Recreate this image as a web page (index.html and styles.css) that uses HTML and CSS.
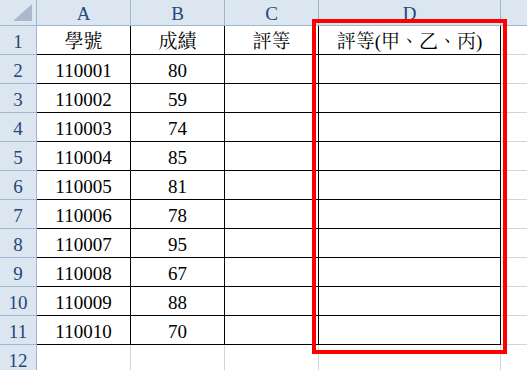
FILE: index.html
```html
<!DOCTYPE html>
<html>
<head>
<meta charset="utf-8">
<title>Sheet</title>
<link rel="stylesheet" href="styles.css">
</head>
<body>
<div class="sheet">
  <div class="grid">
    <div class="corner"><svg width="36" height="25" viewBox="0 0 36 25"><polygon points="13,21 32,21 32,4" fill="#aab9cc"/></svg></div>
    <div class="hd">A</div><div class="hd">B</div><div class="hd">C</div><div class="hd">D</div><div class="hd last"></div>

    <div class="rh">1</div><div class="c">學號</div><div class="c">成績</div><div class="c">評等</div><div class="c">評等(甲、乙、丙)</div><div class="g"></div>
    <div class="rh">2</div><div class="c">110001</div><div class="c">80</div><div class="c"></div><div class="c"></div><div class="g"></div>
    <div class="rh">3</div><div class="c">110002</div><div class="c">59</div><div class="c"></div><div class="c"></div><div class="g"></div>
    <div class="rh">4</div><div class="c">110003</div><div class="c">74</div><div class="c"></div><div class="c"></div><div class="g"></div>
    <div class="rh">5</div><div class="c">110004</div><div class="c">85</div><div class="c"></div><div class="c"></div><div class="g"></div>
    <div class="rh">6</div><div class="c">110005</div><div class="c">81</div><div class="c"></div><div class="c"></div><div class="g"></div>
    <div class="rh">7</div><div class="c">110006</div><div class="c">78</div><div class="c"></div><div class="c"></div><div class="g"></div>
    <div class="rh">8</div><div class="c">110007</div><div class="c">95</div><div class="c"></div><div class="c"></div><div class="g"></div>
    <div class="rh">9</div><div class="c">110008</div><div class="c">67</div><div class="c"></div><div class="c"></div><div class="g"></div>
    <div class="rh">10</div><div class="c">110009</div><div class="c">88</div><div class="c"></div><div class="c"></div><div class="g"></div>
    <div class="rh">11</div><div class="c">110010</div><div class="c">70</div><div class="c"></div><div class="c"></div><div class="g"></div>
    <div class="rh">12</div><div class="g"></div><div class="g"></div><div class="g"></div><div class="g"></div><div class="g"></div>
  </div>
  <div class="highlight"></div>
</div>
</body>
</html>
```

FILE: styles.css
```css
html, body {
  margin: 0;
  padding: 0;
  background: #ffffff;
  overflow: hidden;
}
.sheet {
  position: relative;
  width: 527px;
  height: 370px;
  overflow: hidden;
  font-family: "Liberation Serif", "Times New Roman", "Noto Serif CJK TC", "Noto Sans CJK TC", serif;
  font-size: 19px;
}
.grid {
  display: grid;
  grid-template-columns: 37px 94px 94px 94px 182px 40px;
  grid-template-rows: 26px repeat(12, 29px);
}
.grid > div {
  box-sizing: border-box;
  display: flex;
  align-items: center;
  justify-content: center;
  line-height: 1;
  white-space: nowrap;
}
.corner {
  background: #dce6f1;
  border-right: 1px solid #9eb6ce;
  border-bottom: 1px solid #9eb6ce;
}
.corner svg {
  display: block;
}
.hd {
  background: #dce6f1;
  border-right: 1px solid #9eb6ce;
  border-bottom: 1px solid #9eb6ce;
  color: #25477a;
  padding-top: 2px;
}
.hd.last {
  border-right: none;
}
.rh {
  background: #dce6f1;
  border-right: 1px solid #9eb6ce;
  border-bottom: 1px solid #9eb6ce;
  color: #25477a;
  padding-top: 3px;
}
.c {
  border-right: 1px solid #000000;
  border-bottom: 1px solid #000000;
  color: #000000;
  padding-top: 3px;
}
.g {
  border-right: 1px solid #d4d4d4;
  border-bottom: 1px solid #d4d4d4;
}
.highlight {
  position: absolute;
  left: 312px;
  top: 19px;
  width: 195px;
  height: 335px;
  box-sizing: border-box;
  border: 4px solid #ff0000;
}
```
